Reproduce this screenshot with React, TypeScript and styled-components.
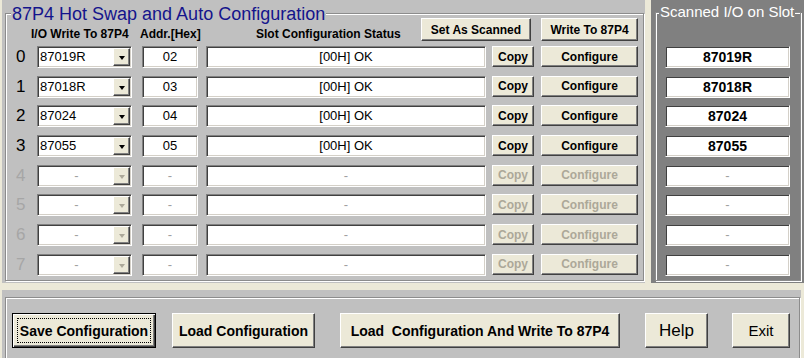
import React from 'react';
import styled, { createGlobalStyle } from 'styled-components';

const GlobalStyle = createGlobalStyle`
  html, body {
    margin: 0;
    padding: 0;
    background: #ece9d8;
  }
  body {
    font-family: 'Liberation Sans', Arial, sans-serif;
  }
`;

// colours of the old win32 dialog
const FACE = '#ece9d8';
const PANEL = '#c0c0c0';
const DARK_PANEL = '#808080';
const DIS_TEXT = '#aca899';

const Window = styled.div`
  width: 804px;
  height: 358px;
  overflow: hidden;
  background: ${FACE};
  display: flex;
  flex-direction: column;
`;

const TopArea = styled.div`
  display: flex;
  gap: 6px;
  height: 283px;
  padding-left: 2px;
`;

const ConfigPanel = styled.div`
  width: 643px;
  box-sizing: border-box;
  background: ${PANEL};
  padding: 13px 1px 2px 3px;
  display: flex;
`;

const ScanPanel = styled.div`
  flex: 1;
  box-sizing: border-box;
  background: ${DARK_PANEL};
  padding: 12px 3px 2px 4px;
  display: flex;
`;

const BottomPanel = styled.div`
  margin: 7px 0 0 2px;
  width: 799px;
  height: 68px;
  box-sizing: border-box;
  background: ${PANEL};
  padding: 7px 1px 0 3px;
  overflow: hidden;
  display: flex;
  align-items: flex-start;
`;

// etched group frame
const GroupBox = styled.div<{ $pad: string; $h?: number }>`
  position: relative;
  flex: 1;
  box-sizing: border-box;
  ${(p) => (p.$h ? `height: ${p.$h}px;` : '')}
  border: 1px solid #8c8c8c;
  box-shadow: inset 1px 1px 0 #fff, 1px 1px 0 #fff;
  padding: ${(p) => p.$pad};
`;

const Caption = styled.span<{ $bg: string; $color: string; $size: number; $top: number; $left: number }>`
  position: absolute;
  top: ${(p) => p.$top}px;
  left: ${(p) => p.$left}px;
  padding: 0 1px;
  background: ${(p) => p.$bg};
  color: ${(p) => p.$color};
  font-size: ${(p) => p.$size}px;
  line-height: ${(p) => p.$size + 4}px;
  white-space: nowrap;
`;

const HeaderRow = styled.div`
  display: flex;
  height: 23px;
  padding-left: 24px;
`;

const HeadText = styled.div<{ $w: number }>`
  width: ${(p) => p.$w}px;
  align-self: flex-end;
  margin-bottom: 0;
  font-size: 12px;
  font-weight: bold;
  line-height: 14px;
  white-space: nowrap;
`;

const Rows = styled.div`
  display: flex;
  flex-direction: column;
  gap: 7.7px;
  margin-top: 5px;
  padding-left: 1px;
`;

const Row = styled.div`
  display: grid;
  grid-template-columns: 29px 105px 64px 286px 49px 97px;
  height: 22px;
  align-items: start;
`;

const SlotNo = styled.div<{ $off?: boolean }>`
  padding-left: 8px;
  font-family: 'Liberation Sans Narrow', 'Liberation Sans', Arial, sans-serif;
  font-size: 17px;
  line-height: 22px;
  color: ${(p) => (p.$off ? '#a6a6a6' : '#000')};
`;

const Field = styled.div<{ $w: number; $off?: boolean; $bold?: boolean }>`
  box-sizing: border-box;
  width: ${(p) => p.$w}px;
  height: 22px;
  background: #fff;
  border-style: solid;
  border-width: 1px;
  border-color: #808080 #fff #fff #808080;
  box-shadow: inset 1px 1px 0 #404040, inset -1px -1px 0 #d4d0c8;
  font-size: ${(p) => (p.$bold ? 14 : 13)}px;
  font-weight: ${(p) => (p.$bold ? 'bold' : 'normal')};
  line-height: 20px;
  text-align: center;
  white-space: nowrap;
  color: ${(p) => (p.$off ? '#a0a0a0' : '#000')};
`;

const Combo = styled(Field)`
  display: flex;
  text-align: left;
`;

const ComboText = styled.div<{ $off?: boolean }>`
  flex: 1;
  padding-left: 2px;
  text-align: ${(p) => (p.$off ? 'center' : 'left')};
`;

const DropButton = styled.div<{ $off?: boolean }>`
  box-sizing: border-box;
  width: 17px;
  height: 18px;
  margin: 1px 1px 0 0;
  background: ${FACE};
  border-style: solid;
  border-width: 1px;
  border-color: #fff #404040 #404040 #fff;
  box-shadow: inset -1px -1px 0 #808080;
  display: flex;
  align-items: center;
  justify-content: center;
  &::after {
    content: '';
    border-left: 3.5px solid transparent;
    border-right: 3.5px solid transparent;
    border-top: 4px solid ${(p) => (p.$off ? DIS_TEXT : '#000')};
    margin-top: 2px;
  }
`;

const Button = styled.button<{ $w: number; $h: number; $size?: number; $weight?: string; $ml?: number; $focus?: boolean }>`
  box-sizing: border-box;
  width: ${(p) => p.$w}px;
  height: ${(p) => p.$h}px;
  margin: 0 0 0 ${(p) => p.$ml ?? 0}px;
  padding: 0;
  background: ${FACE};
  border-style: solid;
  border-width: 1px;
  border-color: ${(p) => (p.$focus ? '#000' : '#fff #404040 #404040 #fff')};
  box-shadow: ${(p) =>
    p.$focus
      ? 'inset 1px 1px 0 #fff, inset -1px -1px 0 #404040, inset -2px -2px 0 #808080'
      : 'inset -1px -1px 0 #808080'};
  font-family: 'Liberation Sans', Arial, sans-serif;
  font-size: ${(p) => p.$size ?? 12}px;
  font-weight: ${(p) => p.$weight ?? 'bold'};
  white-space: pre;
  color: #000;
  display: flex;
  align-items: center;
  justify-content: center;
  &:disabled {
    color: ${DIS_TEXT};
  }
`;

const FocusRing = styled.span`
  box-sizing: border-box;
  width: calc(100% - 8px);
  height: calc(100% - 8px);
  border: 1px dotted #000;
  display: flex;
  align-items: center;
  justify-content: center;
`;

const ScanList = styled.div`
  display: flex;
  flex-direction: column;
  gap: 7.7px;
`;

const ButtonBar = styled.div`
  display: flex;
  align-items: flex-start;
`;

type Slot = { module: string; addr: string; status: string; scanned: string } | null;

const slots: Slot[] = [
  { module: '87019R', addr: '02', status: '[00H] OK', scanned: '87019R' },
  { module: '87018R', addr: '03', status: '[00H] OK', scanned: '87018R' },
  { module: '87024', addr: '04', status: '[00H] OK', scanned: '87024' },
  { module: '87055', addr: '05', status: '[00H] OK', scanned: '87055' },
  null,
  null,
  null,
  null,
];

const App: React.FC = () => {
  return (
    <>
      <GlobalStyle />
      <Window>
        <TopArea>
          <ConfigPanel>
            <GroupBox $pad="4px 0 0 1px">
              <Caption $bg={PANEL} $color="#14148c" $size={18} $top={-11} $left={5}>
                87P4 Hot Swap and Auto Configuration
              </Caption>
              <HeaderRow>
                <HeadText $w={109}>I/O Write To 87P4</HeadText>
                <HeadText $w={116}>Addr.[Hex]</HeadText>
                <HeadText $w={165}>Slot Configuration Status</HeadText>
                <Button $w={110} $h={23}>Set As Scanned</Button>
                <Button $w={97} $h={23} $ml={10}>Write To 87P4</Button>
              </HeaderRow>
              <Rows>
                {slots.map((s, i) => (
                  <Row key={i}>
                    <SlotNo $off={!s}>{i}</SlotNo>
                    <Combo $w={95} $off={!s}>
                      <ComboText $off={!s}>{s ? s.module : '-'}</ComboText>
                      <DropButton $off={!s} />
                    </Combo>
                    <Field $w={56} $off={!s}>{s ? s.addr : '-'}</Field>
                    <Field $w={280} $off={!s}>{s ? s.status : '-'}</Field>
                    <Button $w={42} $h={21} disabled={!s}>Copy</Button>
                    <Button $w={97} $h={21} disabled={!s}>Configure</Button>
                  </Row>
                ))}
              </Rows>
            </GroupBox>
          </ConfigPanel>
          <ScanPanel>
            <GroupBox $pad="33px 0 0 9px">
              <Caption $bg={DARK_PANEL} $color="#fff" $size={15} $top={-11} $left={3}>
                Scanned I/O on Slot
              </Caption>
              <ScanList>
                {slots.map((s, i) => (
                  <Field key={i} $w={125} $bold={!!s} $off={!s}>
                    {s ? s.scanned : '-'}
                  </Field>
                ))}
              </ScanList>
            </GroupBox>
          </ScanPanel>
        </TopArea>
        <BottomPanel>
          <GroupBox $pad="15px 0 0 6px" $h={80}>
            <ButtonBar>
              <Button $w={144} $h={35} $size={14} $focus>
                <FocusRing>Save Configuration</FocusRing>
              </Button>
              <Button $w={143} $h={35} $size={14} $ml={16}>Load Configuration</Button>
              <Button $w={280} $h={35} $size={14} $ml={25}>{'Load  Configuration And Write To 87P4'}</Button>
              <Button $w={63} $h={35} $size={17} $weight="normal" $ml={25}>Help</Button>
              <Button $w={58} $h={35} $size={15} $weight="normal" $ml={24}>Exit</Button>
            </ButtonBar>
          </GroupBox>
        </BottomPanel>
      </Window>
    </>
  );
};

export default App;
